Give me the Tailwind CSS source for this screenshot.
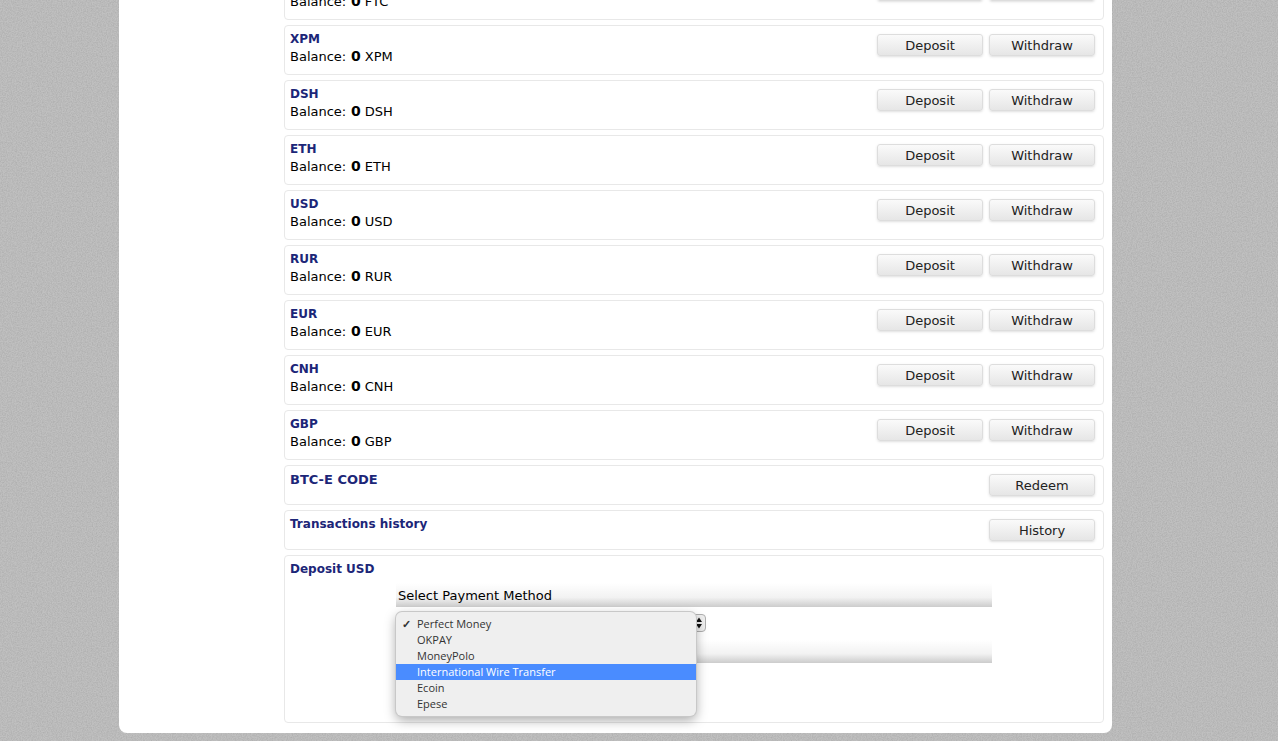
<!DOCTYPE html>
<html lang="en">
<head>
  <meta charset="UTF-8" />
  <title>Funds</title>
  <script src="https://cdn.jsdelivr.net/npm/@tailwindcss/browser@4"></script>
</head>
<body class="relative bg-[#c0c0c0] h-[741px] overflow-hidden font-['DejaVu_Sans',sans-serif] text-[13px] text-black">

  <!-- Grainy page background -->
  <svg class="absolute inset-0 w-full h-full" aria-hidden="true">
    <filter id="grain">
      <feTurbulence type="fractalNoise" baseFrequency="0.8" numOctaves="2" seed="4" />
      <feColorMatrix type="matrix" values="0 0 0 0 0  0 0 0 0 0  0 0 0 0 0  0.16 0 0 0 -0.05" />
    </filter>
    <rect width="100%" height="100%" filter="url(#grain)" />
  </svg>

  <!-- Page column, scrolled so that the first card is cut off at the top -->
  <div class="relative ml-[119px] w-[993px] h-[733px] overflow-hidden bg-white rounded-b-lg pl-[165px] pr-2">
    <div class="-mt-[30px] flex flex-col gap-[5px]">

      <div class="h-[50px] border border-[#e8e8e8] rounded flex justify-between pl-[5px] pr-2 pt-[5px]">
        <div><div class="font-bold text-xs leading-[17px] text-[#1c2678]">FTC</div><div class="leading-[17px]">Balance: <b class="ml-[0.5px] text-sm leading-[17px]">0</b> FTC</div></div>
        <div class="flex gap-1.5 pt-[3px]">
          <button class="w-[106px] h-[22px] pt-px rounded-[3px] border border-[#ddd] bg-linear-to-b from-[#fafafa] to-[#e6e6e6] shadow-sm text-[#222]">Deposit</button>
          <button class="w-[106px] h-[22px] pt-px rounded-[3px] border border-[#ddd] bg-linear-to-b from-[#fafafa] to-[#e6e6e6] shadow-sm text-[#222]">Withdraw</button>
        </div>
      </div>

      <div class="h-[50px] border border-[#e8e8e8] rounded flex justify-between pl-[5px] pr-2 pt-[5px]">
        <div><div class="font-bold text-xs leading-[17px] text-[#1c2678]">XPM</div><div class="leading-[17px]">Balance: <b class="ml-[0.5px] text-sm leading-[17px]">0</b> XPM</div></div>
        <div class="flex gap-1.5 pt-[3px]">
          <button class="w-[106px] h-[22px] pt-px rounded-[3px] border border-[#ddd] bg-linear-to-b from-[#fafafa] to-[#e6e6e6] shadow-sm text-[#222]">Deposit</button>
          <button class="w-[106px] h-[22px] pt-px rounded-[3px] border border-[#ddd] bg-linear-to-b from-[#fafafa] to-[#e6e6e6] shadow-sm text-[#222]">Withdraw</button>
        </div>
      </div>

      <div class="h-[50px] border border-[#e8e8e8] rounded flex justify-between pl-[5px] pr-2 pt-[5px]">
        <div><div class="font-bold text-xs leading-[17px] text-[#1c2678]">DSH</div><div class="leading-[17px]">Balance: <b class="ml-[0.5px] text-sm leading-[17px]">0</b> DSH</div></div>
        <div class="flex gap-1.5 pt-[3px]">
          <button class="w-[106px] h-[22px] pt-px rounded-[3px] border border-[#ddd] bg-linear-to-b from-[#fafafa] to-[#e6e6e6] shadow-sm text-[#222]">Deposit</button>
          <button class="w-[106px] h-[22px] pt-px rounded-[3px] border border-[#ddd] bg-linear-to-b from-[#fafafa] to-[#e6e6e6] shadow-sm text-[#222]">Withdraw</button>
        </div>
      </div>

      <div class="h-[50px] border border-[#e8e8e8] rounded flex justify-between pl-[5px] pr-2 pt-[5px]">
        <div><div class="font-bold text-xs leading-[17px] text-[#1c2678]">ETH</div><div class="leading-[17px]">Balance: <b class="ml-[0.5px] text-sm leading-[17px]">0</b> ETH</div></div>
        <div class="flex gap-1.5 pt-[3px]">
          <button class="w-[106px] h-[22px] pt-px rounded-[3px] border border-[#ddd] bg-linear-to-b from-[#fafafa] to-[#e6e6e6] shadow-sm text-[#222]">Deposit</button>
          <button class="w-[106px] h-[22px] pt-px rounded-[3px] border border-[#ddd] bg-linear-to-b from-[#fafafa] to-[#e6e6e6] shadow-sm text-[#222]">Withdraw</button>
        </div>
      </div>

      <div class="h-[50px] border border-[#e8e8e8] rounded flex justify-between pl-[5px] pr-2 pt-[5px]">
        <div><div class="font-bold text-xs leading-[17px] text-[#1c2678]">USD</div><div class="leading-[17px]">Balance: <b class="ml-[0.5px] text-sm leading-[17px]">0</b> USD</div></div>
        <div class="flex gap-1.5 pt-[3px]">
          <button class="w-[106px] h-[22px] pt-px rounded-[3px] border border-[#ddd] bg-linear-to-b from-[#fafafa] to-[#e6e6e6] shadow-sm text-[#222]">Deposit</button>
          <button class="w-[106px] h-[22px] pt-px rounded-[3px] border border-[#ddd] bg-linear-to-b from-[#fafafa] to-[#e6e6e6] shadow-sm text-[#222]">Withdraw</button>
        </div>
      </div>

      <div class="h-[50px] border border-[#e8e8e8] rounded flex justify-between pl-[5px] pr-2 pt-[5px]">
        <div><div class="font-bold text-xs leading-[17px] text-[#1c2678]">RUR</div><div class="leading-[17px]">Balance: <b class="ml-[0.5px] text-sm leading-[17px]">0</b> RUR</div></div>
        <div class="flex gap-1.5 pt-[3px]">
          <button class="w-[106px] h-[22px] pt-px rounded-[3px] border border-[#ddd] bg-linear-to-b from-[#fafafa] to-[#e6e6e6] shadow-sm text-[#222]">Deposit</button>
          <button class="w-[106px] h-[22px] pt-px rounded-[3px] border border-[#ddd] bg-linear-to-b from-[#fafafa] to-[#e6e6e6] shadow-sm text-[#222]">Withdraw</button>
        </div>
      </div>

      <div class="h-[50px] border border-[#e8e8e8] rounded flex justify-between pl-[5px] pr-2 pt-[5px]">
        <div><div class="font-bold text-xs leading-[17px] text-[#1c2678]">EUR</div><div class="leading-[17px]">Balance: <b class="ml-[0.5px] text-sm leading-[17px]">0</b> EUR</div></div>
        <div class="flex gap-1.5 pt-[3px]">
          <button class="w-[106px] h-[22px] pt-px rounded-[3px] border border-[#ddd] bg-linear-to-b from-[#fafafa] to-[#e6e6e6] shadow-sm text-[#222]">Deposit</button>
          <button class="w-[106px] h-[22px] pt-px rounded-[3px] border border-[#ddd] bg-linear-to-b from-[#fafafa] to-[#e6e6e6] shadow-sm text-[#222]">Withdraw</button>
        </div>
      </div>

      <div class="h-[50px] border border-[#e8e8e8] rounded flex justify-between pl-[5px] pr-2 pt-[5px]">
        <div><div class="font-bold text-xs leading-[17px] text-[#1c2678]">CNH</div><div class="leading-[17px]">Balance: <b class="ml-[0.5px] text-sm leading-[17px]">0</b> CNH</div></div>
        <div class="flex gap-1.5 pt-[3px]">
          <button class="w-[106px] h-[22px] pt-px rounded-[3px] border border-[#ddd] bg-linear-to-b from-[#fafafa] to-[#e6e6e6] shadow-sm text-[#222]">Deposit</button>
          <button class="w-[106px] h-[22px] pt-px rounded-[3px] border border-[#ddd] bg-linear-to-b from-[#fafafa] to-[#e6e6e6] shadow-sm text-[#222]">Withdraw</button>
        </div>
      </div>

      <div class="h-[50px] border border-[#e8e8e8] rounded flex justify-between pl-[5px] pr-2 pt-[5px]">
        <div><div class="font-bold text-xs leading-[17px] text-[#1c2678]">GBP</div><div class="leading-[17px]">Balance: <b class="ml-[0.5px] text-sm leading-[17px]">0</b> GBP</div></div>
        <div class="flex gap-1.5 pt-[3px]">
          <button class="w-[106px] h-[22px] pt-px rounded-[3px] border border-[#ddd] bg-linear-to-b from-[#fafafa] to-[#e6e6e6] shadow-sm text-[#222]">Deposit</button>
          <button class="w-[106px] h-[22px] pt-px rounded-[3px] border border-[#ddd] bg-linear-to-b from-[#fafafa] to-[#e6e6e6] shadow-sm text-[#222]">Withdraw</button>
        </div>
      </div>

      <div class="h-[40px] border border-[#e8e8e8] rounded flex justify-between pl-[5px] pr-2 pt-[4px]">
        <div class="font-bold text-[13px] leading-[19px] text-[#1c2678]">BTC-E CODE</div>
        <div class="pt-[4px]">
          <button class="w-[106px] h-[22px] pt-px rounded-[3px] border border-[#ddd] bg-linear-to-b from-[#fafafa] to-[#e6e6e6] shadow-sm text-[#222]">Redeem</button>
        </div>
      </div>

      <div class="h-[40px] border border-[#e8e8e8] rounded flex justify-between pl-[5px] pr-2 pt-[4px]">
        <div class="font-bold text-xs leading-[18px] text-[#1c2678]">Transactions history</div>
        <div class="pt-[4px]">
          <button class="w-[106px] h-[22px] pt-px rounded-[3px] border border-[#ddd] bg-linear-to-b from-[#fafafa] to-[#e6e6e6] shadow-sm text-[#222]">History</button>
        </div>
      </div>

      <!-- Deposit form, with the open select menu on top -->
      <div class="relative h-[168px] border border-[#e8e8e8] rounded pl-[5px] pt-[4px]">
        <div class="font-bold text-xs leading-[18px] text-[#1c2678]">Deposit USD</div>
        <div class="w-[596px] ml-[106px] mt-[5px]">
          <div class="h-[24px] pl-0.5 leading-[25px] bg-linear-to-b from-white via-[#f2f2f2] via-60% to-[#cccccc]">Select Payment Method</div>
          <div class="h-[33px] flex items-start pt-[7px]">
            <div class="relative ml-[290px] w-[20px] h-[18px] rounded-[4px] border border-[#b0b0b0] bg-[#efefef]">
              <svg class="absolute left-[9px] top-px" width="6" height="14" viewBox="0 0 6 14" fill="#111"><path d="M0 6 L3 1.5 L6 6 Z" /><path d="M0 8 L3 12.5 L6 8 Z" /></svg>
            </div>
          </div>
          <div class="h-[23px] bg-linear-to-b from-white via-[#f2f2f2] via-60% to-[#cccccc]"></div>
        </div>

        <div class="absolute left-[111px] top-[56px] w-[300px] h-[104px] py-[4px] rounded-[6px] bg-[#efefef] shadow-[0_0_0_1px_#c8c8c8,0_4px_12px_rgba(0,0,0,0.35)] font-['Open_Sans',sans-serif] text-[11px] text-[#333]">
          <div class="relative h-4 leading-4 pl-[21px]"><span class="absolute left-[6px] font-bold">✓</span>Perfect Money</div>
          <div class="h-4 leading-4 pl-[21px]">OKPAY</div>
          <div class="h-4 leading-4 pl-[21px]">MoneyPolo</div>
          <div class="h-4 leading-4 pl-[21px] bg-[#4a8cff] text-white">International Wire Transfer</div>
          <div class="h-4 leading-4 pl-[21px]">Ecoin</div>
          <div class="h-4 leading-4 pl-[21px]">Epese</div>
        </div>
      </div>

    </div>
  </div>
</body>
</html>
